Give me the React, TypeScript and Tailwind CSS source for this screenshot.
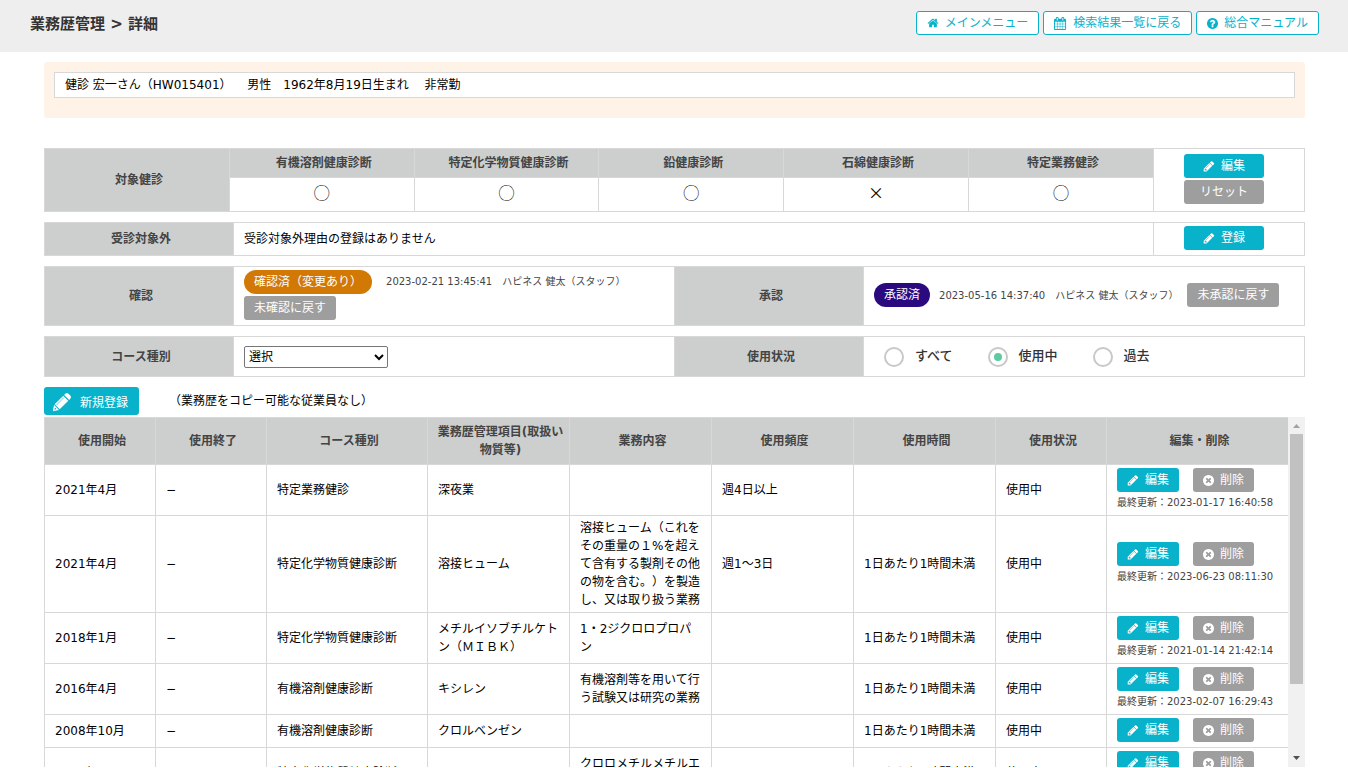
import { useState } from 'react';
import type { ReactNode } from 'react';

// size keeps the glyphs optically equal, since each one fills its box differently
const ICONS = {
  pencil: {
    box: '128 128 1536 1600',
    size: 'h-[11px] w-3',
    path: 'M491 1536l91-91-235-235-91 91v107h128v128h107zm523-928q0-22-22-22-10 0-17 7l-542 542q-7 7-7 17 0 22 22 22 10 0 17-7l542-542q7-7 7-17zm-54-192l416 416-832 832h-416v-416zm683 96q0 53-37 90l-166 166-416-416 166-165q36-38 90-38 53 0 91 38l235 234q37 39 37 91z'
  },
  remove: {
    box: '128 128 1536 1536',
    size: 'size-[11px]',
    path: 'M1277 1122q0-26-19-45l-181-181 181-181q19-19 19-45 0-27-19-46l-90-90q-19-19-46-19-26 0-45 19l-181 181-181-181q-19-19-45-19-27 0-46 19l-90 90q-19 19-19 46 0 26 19 45l181 181-181 181q-19 19-19 45 0 27 19 46l90 90q19 19 46 19 26 0 45-19l181-181 181 181q19 19 45 19 27 0 46-19l90-90q19-19 19-46zm387-226q0 209-103 385.5t-279.5 279.5-385.5 103-385.5-103-279.5-279.5-103-385.5 103-385.5 279.5-279.5 385.5-103 385.5 103 279.5 279.5 103 385.5z'
  },
  question: {
    box: '128 128 1536 1536',
    size: 'size-[11px]',
    path: 'M1024 1376v-192q0-14-9-23t-23-9h-192q-14 0-23 9t-9 23v192q0 14 9 23t23 9h192q14 0 23-9t9-23zm256-672q0-88-55.5-163t-138.5-116-170-41q-243 0-371 213-15 24 8 42l132 100q7 6 19 6 16 0 25-12 53-68 86-92 34-24 86-24 48 0 85.5 26t37.5 59q0 38-20 61t-68 45q-63 28-115.5 86.5t-52.5 125.5v36q0 14 9 23t23 9h192q14 0 23-9t9-23q0-19 21.5-49.5t54.5-49.5q32-18 49-28.5t46-35 44.5-48 28-60.5 12.5-81zm384 192q0 209-103 385.5t-279.5 279.5-385.5 103-385.5-103-279.5-279.5-103-385.5 103-385.5 279.5-279.5 385.5-103 385.5 103 279.5 279.5 103 385.5z'
  },
  home: {
    box: '0 0 1792 1792',
    size: 'size-3',
    path: 'M1472 992v480q0 26-19 45t-45 19h-384v-384h-256v384h-384q-26 0-45-19t-19-45v-480q0-1 .5-3t.5-3l575-474 575 474q1 2 1 6zm223-69l-62 74q-8 9-21 11h-3q-13 0-21-7l-692-577-692 577q-12 8-24 7-13-2-21-11l-62-74q-8-10-7-23.5t11-21.5l719-599q32-26 76-26t76 26l244 204v-195q0-14 9-23t23-9h192q14 0 23 9t9 23v408l219 182q10 8 11 21.5t-7 23.5z'
  },
  calendar: {
    box: '64 0 1792 1792',
    size: 'size-[13px]',
    path: 'M192 1664h288v-288h-288v288zm352 0h320v-288h-320v288zm-352-352h288v-320h-288v320zm352 0h320v-320h-320v320zm-352-384h288v-288h-288v288zm736 736h320v-288h-320v288zm-384-736h320v-288h-320v288zm768 736h288v-288h-288v288zm-384-352h320v-320h-320v320zm-352-864v-288q0-13-9.5-22.5t-22.5-9.5h-64q-13 0-22.5 9.5t-9.5 22.5v288q0 13 9.5 22.5t22.5 9.5h64q13 0 22.5-9.5t9.5-22.5zm736 864h288v-320h-288v320zm-384-384h320v-288h-320v288zm384 0h288v-288h-288v288zm32-480v-288q0-13-9.5-22.5t-22.5-9.5h-64q-13 0-22.5 9.5t-9.5 22.5v288q0 13 9.5 22.5t22.5 9.5h64q13 0 22.5-9.5t9.5-22.5zm384-64v1280q0 52-38 90t-90 38h-1408q-52 0-90-38t-38-90v-1280q0-52 38-90t90-38h128v-96q0-66 47-113t113-47h64q66 0 113 47t47 113v96h384v-96q0-66 47-113t113-47h64q66 0 113 47t47 113v96h128q52 0 90 38t38 90z'
  }
};

type IconName = keyof typeof ICONS;

interface WorkRecord {
  start: string;
  course: string;
  item: string;
  content: string;
  frequency: string;
  hours: string;
  updated?: string;
}

const records: WorkRecord[] = [
  {
    start: '2021年4月',
    course: '特定業務健診',
    item: '深夜業',
    content: '',
    frequency: '週4日以上',
    hours: '',
    updated: '2023-01-17 16:40:58'
  },
  {
    start: '2021年4月',
    course: '特定化学物質健康診断',
    item: '溶接ヒューム',
    content: '溶接ヒューム（これをその重量の１%を超えて含有する製剤その他の物を含む。）を製造し、又は取り扱う業務',
    frequency: '週1～3日',
    hours: '1日あたり1時間未満',
    updated: '2023-06-23 08:11:30'
  },
  {
    start: '2018年1月',
    course: '特定化学物質健康診断',
    item: 'メチルイソブチルケトン（ＭＩＢＫ）',
    content: '1・2ジクロロプロパン',
    frequency: '',
    hours: '1日あたり1時間未満',
    updated: '2021-01-14 21:42:14'
  },
  {
    start: '2016年4月',
    course: '有機溶剤健康診断',
    item: 'キシレン',
    content: '有機溶剤等を用いて行う試験又は研究の業務',
    frequency: '',
    hours: '1日あたり1時間未満',
    updated: '2023-02-07 16:29:43'
  },
  {
    start: '2008年10月',
    course: '有機溶剤健康診断',
    item: 'クロルベンゼン',
    content: '',
    frequency: '',
    hours: '1日あたり1時間未満'
  },
  {
    start: '2008年4月',
    course: '特定化学物質健康診断',
    item: '',
    content: 'クロロメチルメチルエーテル',
    frequency: '',
    hours: '1日あたり1時間未満',
    updated: '2021-01-14 21:40:02'
  }
];

const checkups = [
  { name: '有機溶剤健康診断', mark: '◯' },
  { name: '特定化学物質健康診断', mark: '◯' },
  { name: '鉛健康診断', mark: '◯' },
  { name: '石綿健康診断', mark: '×' },
  { name: '特定業務健診', mark: '◯' }
];

const usageOptions = ['すべて', '使用中', '過去'];

const Icon = ({ name }: { name: IconName }) => (
  <svg viewBox={ICONS[name].box} fill="currentColor" aria-hidden="true" className={`shrink-0 ${ICONS[name].size}`}>
    <path d={ICONS[name].path} />
  </svg>
);

const BigPencil = () => (
  <svg viewBox="0 0 20 20" fill="currentColor" aria-hidden="true" className="size-5 shrink-0 self-center">
    <path d="M13.300 1.700a2.200 2.200 0 0 1 3.100 0l1.900 1.900a2.200 2.200 0 0 1 0 3.100l-1.200 1.200-5-5z" />
    <path d="M11.300 3.700l5 5-8.600 8.600-5-5z" />
    <path
      fillRule="evenodd"
      d="M2.100 13l4.900 4.900-5.100 1.200q-1.200.2-1-1zm1 2.500l-.8 2.200 2.200-.8z"
    />
    <path d="M11.900 5.600L4.300 13.200" stroke="#08b2cb" strokeWidth=".6" />
    <path d="M11.400 3.200l5.400 5.400" stroke="#08b2cb" strokeWidth=".6" />
  </svg>
);

const NavLink = ({ icon, children }: { icon: IconName; children: ReactNode }) => (
  <a
    href="#"
    className="flex h-6 items-center gap-[6px] rounded-[3px] border border-[#08b2cb] bg-white px-[10px] text-[#08b2cb]"
  >
    <Icon name={icon} />
    {children}
  </a>
);

interface ButtonProps {
  color: 'teal' | 'gray';
  icon?: IconName;
  wide?: boolean;
  children: ReactNode;
}

const Button = ({ color, icon, wide, children }: ButtonProps) => (
  <button
    type="button"
    className={`mb-[2px] flex h-6 shrink-0 items-center justify-center gap-[6px] rounded-[3px] px-[10px] text-white ${
      color === 'teal' ? 'bg-[#08b2cb]' : 'bg-[#9e9e9e]'
    } ${wide ? 'w-20' : ''}`}
  >
    {icon && <Icon name={icon} />}
    {children}
  </button>
);

const Th = ({ className = '', rowSpan, children }: { className?: string; rowSpan?: number; children: ReactNode }) => (
  <th rowSpan={rowSpan} className={`border border-[#d8d8d8] bg-[#cdcfce] pr-1 pl-2 font-bold text-[#444] ${className}`}>
    {children}
  </th>
);

const Td = ({ className = '', rowSpan, children }: { className?: string; rowSpan?: number; children?: ReactNode }) => (
  <td rowSpan={rowSpan} className={`border border-[#d8d8d8] px-[10px] py-[3px] ${className}`}>
    {children}
  </td>
);

const Scrollbar = () => (
  <div aria-hidden="true" className="flex w-[17px] shrink-0 flex-col items-center bg-[#f1f1f1]">
    <svg viewBox="0 0 17 17" className="size-[17px] shrink-0">
      <path d="M5 11h7L8.500 7z" fill="#a3a3a3" />
    </svg>
    <div className="h-[250px] w-[13px] bg-[#c1c1c1]" />
    <svg viewBox="0 0 17 17" className="mt-auto size-[17px] shrink-0">
      <path d="M5 6h7L8.500 10z" fill="#505050" />
    </svg>
  </div>
);

const App = () => {
  const [usage, setUsage] = useState<string>('使用中');

  return (
    <div
      lang="ja"
      className="bg-white font-['DejaVu_Sans','Noto_Sans_CJK_JP',sans-serif] text-[12px] leading-[18px] text-black [text-spacing-trim:space-all]"
    >
      <header className="flex h-[52px] items-start justify-between bg-[#eee] pt-[11px] pr-[29px] pl-[30px]">
        <h1 className="text-[15px] leading-[26px] font-bold text-[#333]">業務歴管理 &gt; 詳細</h1>
        <nav className="flex gap-1">
          <NavLink icon="home">メインメニュー</NavLink>
          <NavLink icon="calendar">検索結果一覧に戻る</NavLink>
          <NavLink icon="question">総合マニュアル</NavLink>
        </nav>
      </header>

      <main className="pt-[10px] pr-[43px] pl-11">
        <section className="mb-[30px] rounded-[3px] bg-[#fef3e6] px-[10px] pt-[10px] pb-5">
          <p className="border border-[#d8d8d8] bg-white px-[10px] py-[3px] whitespace-pre-wrap">
            健診 宏一さん（HW015401）　 男性　1962年8月19日生まれ　 非常勤
          </p>
        </section>

        <div className="flex flex-col gap-[10px]">
          <table className="w-full table-fixed border-collapse text-center">
            <colgroup>
              <col />
              <col />
              <col />
              <col />
              <col />
              <col />
              <col className="w-[12%]" />
            </colgroup>
            <tbody>
              <tr className="h-[29px]">
                <Th rowSpan={2}>対象健診</Th>
                {checkups.map(checkup => (
                  <Th key={checkup.name}>{checkup.name}</Th>
                ))}
                <Td rowSpan={2}>
                  <div className="flex flex-col items-center pr-[10px]">
                    <Button color="teal" icon="pencil" wide>編集</Button>
                    <Button color="gray" wide>リセット</Button>
                  </div>
                </Td>
              </tr>
              <tr className="h-[34px]">
                {checkups.map(checkup => (
                  <Td key={checkup.name} className="pb-2 font-['Noto_Sans_CJK_JP',sans-serif] text-[16px]">
                    {checkup.mark}
                  </Td>
                ))}
              </tr>
            </tbody>
          </table>

          <table className="w-full table-fixed border-collapse">
            <tbody>
              <tr>
                <Th className="w-[15%]">受診対象外</Th>
                <Td>受診対象外理由の登録はありません</Td>
                <Td className="w-[12%]">
                  <div className="flex justify-center pr-[10px]">
                    <Button color="teal" icon="pencil" wide>登録</Button>
                  </div>
                </Td>
              </tr>
            </tbody>
          </table>

          <table className="w-full table-fixed border-collapse">
            <tbody>
              <tr>
                <Th className="w-[15%]">確認</Th>
                <Td className="w-[35%]">
                  <div className="mb-[2px] flex items-center gap-[14px]">
                    <span className="rounded-full bg-[#d27805] px-[10px] py-[3px] text-white">確認済（変更あり）</span>
                    <span className="text-[10px] text-[#444]">2023-02-21 13:45:41　ハピネス 健太（スタッフ）</span>
                  </div>
                  <Button color="gray">未確認に戻す</Button>
                </Td>
                <Th className="w-[15%]">承認</Th>
                <Td className="w-[35%]">
                  <div className="flex items-center gap-[9px]">
                    <span className="mb-[2px] shrink-0 rounded-full bg-[#2b0a80] px-[10px] py-[3px] text-white">承認済</span>
                    <span className="text-[10px] whitespace-nowrap text-[#444]">2023-05-16 14:37:40　ハピネス 健太（スタッフ）</span>
                    <Button color="gray">未承認に戻す</Button>
                  </div>
                </Td>
              </tr>
            </tbody>
          </table>

          <table className="w-full table-fixed border-collapse">
            <tbody>
              <tr className="h-10">
                <Th className="w-[15%]">
                  <label htmlFor="course">コース種別</label>
                </Th>
                <Td className="w-[35%]">
                  <select id="course" className="block h-[22px] w-36 rounded-[2px] border border-[#767676] bg-white">
                    <option>選択</option>
                    <option>有機溶剤健康診断</option>
                    <option>特定化学物質健康診断</option>
                    <option>特定業務健診</option>
                  </select>
                </Td>
                <Th className="w-[15%]">使用状況</Th>
                <Td className="w-[35%]">
                  <div className="flex gap-[35px] pl-[10px]">
                    {usageOptions.map(option => (
                      <label key={option} className="flex gap-[11px] text-[13px] font-medium text-[#333]">
                        <input
                          type="radio"
                          name="usage"
                          value={option}
                          checked={usage === option}
                          onChange={e => setUsage(e.target.value)}
                          className="grid size-5 appearance-none place-items-center rounded-full border-2 border-[#c8c8c8] bg-white before:size-2 before:rounded-full checked:before:bg-[#5ccba0]"
                        />
                        {option}
                      </label>
                    ))}
                  </div>
                </Td>
              </tr>
            </tbody>
          </table>
        </div>

        <div className="mt-[10px] mb-[2px] flex items-center gap-[30px]">
          <button
            type="button"
            className="flex h-7 items-end gap-2 rounded-[3px] bg-[#08b2cb] pt-1 pr-[11px] pb-[3px] pl-2 text-white"
          >
            <BigPencil />
            新規登録
          </button>
          <p>（業務歴をコピー可能な従業員なし）</p>
        </div>

        <div className="flex h-[350px]">
          <div className="grow overflow-y-auto [scrollbar-width:none]">
            <table className="w-full table-fixed border-collapse">
              <colgroup>
                <col className="w-[111px]" />
                <col className="w-[111px]" />
                <col className="w-[161px]" />
                <col className="w-[142px]" />
                <col className="w-[142px]" />
                <col className="w-[142px]" />
                <col className="w-[142px]" />
                <col className="w-[111px]" />
                <col className="w-[182px]" />
              </colgroup>
              <thead>
                <tr className="h-[47px]">
                  <Th>使用開始</Th>
                  <Th>使用終了</Th>
                  <Th>コース種別</Th>
                  <Th>業務歴管理項目(取扱い物質等)</Th>
                  <Th>業務内容</Th>
                  <Th>使用頻度</Th>
                  <Th>使用時間</Th>
                  <Th>使用状況</Th>
                  <Th>編集・削除</Th>
                </tr>
              </thead>
              <tbody>
                {records.map((record, index) => (
                  <tr key={index}>
                    <Td>{record.start}</Td>
                    <Td>−</Td>
                    <Td>{record.course}</Td>
                    <Td>{record.item}</Td>
                    <Td>{record.content}</Td>
                    <Td>{record.frequency}</Td>
                    <Td>{record.hours}</Td>
                    <Td>使用中</Td>
                    <Td>
                      <div className="flex gap-[14px]">
                        <Button color="teal" icon="pencil">編集</Button>
                        <Button color="gray" icon="remove">削除</Button>
                      </div>
                      {record.updated && (
                        <p className="text-[10px] whitespace-nowrap text-[#444]">最終更新：{record.updated}</p>
                      )}
                    </Td>
                  </tr>
                ))}
              </tbody>
            </table>
          </div>
          <Scrollbar />
        </div>
      </main>
    </div>
  );
};

export default App;
